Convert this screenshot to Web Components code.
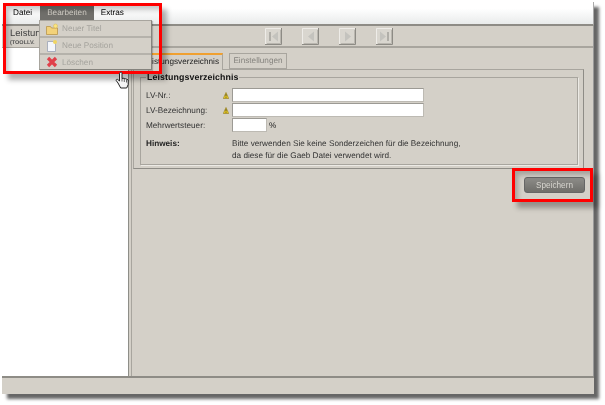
<!DOCTYPE html>
<html>
<head>
<meta charset="utf-8">
<style>
html, body { margin: 0; padding: 0; background: #fff; overflow: hidden; }
body { width: 605px; height: 405px; position: relative; font: 8.2px "Liberation Sans", Arial, sans-serif; color: #222; text-rendering: geometricPrecision; filter: blur(.3px); }
</style>
</head>
<body>
<app-window>
  <menu-bar slot="menu"></menu-bar>
  <side-panel slot="side"></side-panel>
  <nav-toolbar slot="toolbar"></nav-toolbar>
  <lv-tabs slot="tabs"></lv-tabs>
  <lv-form slot="content"></lv-form>
</app-window>
<edit-menu></edit-menu>
<red-mark style="left:3px;top:3px;width:153px;height:65px"></red-mark>
<red-mark style="left:512px;top:168px;width:75px;height:28px"></red-mark>
<hand-cursor></hand-cursor>

<script>
const windowTemplate = document.createElement('template');
windowTemplate.innerHTML = `
<style>
:host { display: flex; flex-direction: column; box-sizing: border-box; width: 592px; height: 392px; margin: 2px 0 0 2px;
  background: #d4d0c8; box-shadow: 5px 5px 3px #666; }
.main { flex: 1; display: grid; grid-template-columns: 127px 1fr; min-height: 0; border-right: 1px solid #999; }
.side { border-right: 1px solid #8e8e88; background: #fff; }
.right { border-left: 2px solid #d4d0c8; box-shadow: inset 1px 0 0 #a8a59e; display: flex; flex-direction: column; min-width: 0; }
.status { height: 16px; border-top: 2px solid #8e8c86; background: #d4d0c8; }
</style>
<slot name="menu"></slot>
<div class="main">
  <div class="side"><slot name="side"></slot></div>
  <div class="right">
    <slot name="toolbar"></slot>
    <slot name="tabs"></slot>
    <slot name="content"></slot>
  </div>
</div>
<div class="status"></div>
`;
class AppWindow extends HTMLElement {
  constructor() {
    super();
    this.attachShadow({mode: 'open'}).append(windowTemplate.content.cloneNode(true));
  }
}
customElements.define('app-window', AppWindow);

class MenuBar extends HTMLElement {
  constructor() {
    super();
    this.attachShadow({mode: 'open'}).innerHTML = `
<style>
:host { display: flex; height: 24px; box-sizing: border-box; padding: 4px 0 0 5px; align-items: flex-start;
  background: linear-gradient(#fff 30%, #e9ebeb); border-bottom: 2px solid #8e8c86; border-right: 1px solid #aaa; }
span { height: 14px; line-height: 14px; padding: 0 7px 0 6px; font-size: 8.2px; color: #000; }
.on { background: #706f6b; color: #d4d0c8; padding: 0 7px; margin: 0 1px 0 1px; }
</style>
<span>Datei</span><span class="on">Bearbeiten</span><span>Extras</span>`;
  }
}
customElements.define('menu-bar', MenuBar);

class SidePanel extends HTMLElement {
  constructor() {
    super();
    this.attachShadow({mode: 'open'}).innerHTML = `
<style>
:host { display: block; }
.head { height: 19px; background: #d4d0c8; border-bottom: 1px solid #a8a59e; padding: 2px 0 0 8px; overflow: hidden; }
b { display: block; font-weight: normal; font-size: 9.5px; line-height: 11px; color: #444; }
small { display: block; font-size: 5.5px; line-height: 8px; font-weight: bold; color: #555; }
</style>
<div class="head"><b>Leistun</b><small>(TOOLLV.</small></div>`;
  }
}
customElements.define('side-panel', SidePanel);

const navIcons = {
  first: '<path d="M4 4h2v9H4z" fill="#b0aea8"/><path d="M13 3.500v10L7 8.500z"/>',
  prev: '<path d="M12 3.500v10L6 8.500z"/>',
  next: '<path d="M6 3.500v10l6-5z"/>',
  last: '<path d="M4 3.500v10l6-5z"/><path d="M11 4h2v9h-2z" fill="#b0aea8"/>'
};
class NavToolbar extends HTMLElement {
  constructor() {
    super();
    const buttons = Object.values(navIcons).map(p => `<svg width="17" height="17" viewBox="0 0 17 17">
      <rect width="17" height="17" fill="#d9d6cf"/><path d="M.5 16V.5H16" fill="none" stroke="#eeece8"/><path d="M16.500 0v16.500H0" fill="none" stroke="#8d8b85"/><path d="M15.500 2v13.500H2" fill="none" stroke="#b9b6af"/>
      <g fill="#c4c3be">${p}</g></svg>`).join('');
    this.attachShadow({mode: 'open'}).innerHTML = `
<style>
:host { display: flex; padding: 2px 0 0 134px; box-sizing: border-box; gap: 20px; border-bottom: 2px solid #a8a59e; height: 22px; }
svg { display: block; }
</style>${buttons}`;
  }
}
customElements.define('nav-toolbar', NavToolbar);

class LvTabs extends HTMLElement {
  constructor() {
    super();
    this.attachShadow({mode: 'open'}).innerHTML = `
<style>
:host { display: flex; align-items: flex-start; gap: 6px; height: 22px; box-sizing: border-box; padding: 5px 0 0 8px; margin-bottom: -1px; position: relative; z-index: 1; }
div { box-sizing: border-box; height: 16px; line-height: 14px; font-size: 8.2px; text-align: center; border: 1px solid #a8a59e; }
.on { width: 84px; height: 17px; border-top: 2px solid #f0a030; border-bottom: 0; background: #d4d0c8; color: #222; }
.off { width: 58px; color: #85837e; }
</style>
<div class="on">Leistungsverzeichnis</div><div class="off">Einstellungen</div>`;
  }
}
customElements.define('lv-tabs', LvTabs);

class FormRow extends HTMLElement {
  constructor() {
    super();
    const warn = this.hasAttribute('warn') ? `<svg width="6" height="7" viewBox="0 0 6 7"><path d="M3 .5 5.700 6.500H.3z" fill="#f2d21e" stroke="#8a7420" stroke-width=".6"/><path d="M3 2.200v2.300M3 5v.8" stroke="#333" stroke-width=".8"/></svg>` : '';
    this.attachShadow({mode: 'open'}).innerHTML = `
<style>
:host { display: grid; grid-template-columns: 75px 11px 1fr; align-items: center; height: 14px; margin-bottom: 1px; padding-left: 5px; }
label { font-size: 8.2px; color: #333; }
svg { display: block; margin-left: 2px; }
.box { display: flex; align-items: center; gap: 2px; font-size: 8.2px; }
i { display: block; box-sizing: border-box; height: 14px; background: #fff; border: 1px solid #9c9a94; border-right-color: #bdbab3; border-bottom-color: #bdbab3; width: var(--w, 192px); }
</style>
<label>${this.getAttribute('label')}</label><span>${warn}</span>
<div class="box"><i></i><slot></slot></div>`;
  }
}
customElements.define('form-row', FormRow);

class LvForm extends HTMLElement {
  constructor() {
    super();
    this.attachShadow({mode: 'open'}).innerHTML = `
<style>
:host { display: block; }
.panel { box-sizing: border-box; width: 451px; height: 100px; margin-left: 2px; padding: 3px 5px 0 6px; border: 1px solid #a8a59e; border-right-color: #8e8c86; border-bottom-color: #8e8c86; }
fieldset { box-sizing: border-box; height: 92px; margin: 0; padding: 0; border: 1px solid #a8a59e; box-shadow: 1px 1px 0 #eceae5; }
legend { margin-left: 5px; padding: 0 1px; font-size: 8.8px; font-weight: bold; color: #111; line-height: 9px; letter-spacing: .1px; }
.rows { padding-top: 6px; }
.hint { display: grid; grid-template-columns: 86px 1fr; padding: 5px 0 0 5px; font-size: 8.2px; line-height: 12px; color: #333; }
.hint b { color: #222; }
.actions { display: flex; justify-content: flex-end; padding-top: 8px; width: 454px; }
button { box-sizing: border-box; width: 61px; height: 16px; padding: 0; border: 1px solid #666; border-radius: 3px; font: 8.2px "Liberation Sans", Arial, sans-serif; color: #d8d6d0;
  background: linear-gradient(#8d8c88, #6f6e6a); }
</style>
<div class="panel">
  <fieldset>
    <legend>Leistungsverzeichnis</legend>
    <div class="rows">
      <form-row label="LV-Nr.:" warn></form-row>
      <form-row label="LV-Bezeichnung:" warn></form-row>
      <form-row label="Mehrwertsteuer:" style="--w:35px">%</form-row>
    </div>
    <div class="hint"><b>Hinweis:</b><span>Bitte verwenden Sie keine Sonderzeichen für die Bezeichnung,<br>da diese für die Gaeb Datei verwendet wird.</span></div>
  </fieldset>
</div>
<div class="actions"><button>Speichern</button></div>`;
  }
}
customElements.define('lv-form', LvForm);

class EditMenu extends HTMLElement {
  constructor() {
    super();
    this.attachShadow({mode: 'open'}).innerHTML = `
<style>
:host { position: absolute; left: 39px; top: 20px; width: 113px; box-sizing: border-box; background: #d4d0c8; border: 1px solid #a8a59e; border-right-color: #85837d; border-bottom-color: #85837d; z-index: 3; box-shadow: 1px 1px 1px rgba(0,0,0,.2); }
div { display: flex; align-items: center; gap: 4px; height: 15px; padding-left: 6px; font-size: 8.2px; color: #a5a39d; border-bottom: 2px solid #b5b2ab; }
div:last-child { border-bottom: 0; height: 14px; }
svg { flex: none; display: block; }
</style>
<div><svg width="12" height="12" viewBox="0 0 12 12"><path d="M.5 3.500h4l1 1.500h6v6.500H.5z" fill="#f3d27a" stroke="#b9964a" stroke-width=".8"/><circle cx="9.500" cy="3" r="2" fill="#fbe680" stroke="#d8b850" stroke-width=".5"/></svg>Neuer Titel</div>
<div><svg width="12" height="13" viewBox="0 0 12 13"><path d="M1.500 2.500h6l2 2v8h-8z" fill="#f4f6fb" stroke="#9aa3b5" stroke-width=".8"/><circle cx="9" cy="3" r="2" fill="#f0d560"/></svg>Neue Position</div>
<div><svg width="12" height="12" viewBox="0 0 12 12"><path d="M2 2l8 8M10 2l-8 8" stroke="#e0404a" stroke-width="3.200"/></svg>Löschen</div>`;
  }
}
customElements.define('edit-menu', EditMenu);

class RedMark extends HTMLElement {
  constructor() {
    super();
    this.attachShadow({mode: 'open'}).innerHTML = `
<style>
:host { position: absolute; display: block; border: 3px solid #f00; z-index: 4; box-shadow: 5px 6px 5px rgba(0,0,0,.3), inset 5px 6px 5px -2px rgba(0,0,0,.22); }
</style>`;
  }
}
customElements.define('red-mark', RedMark);

class HandCursor extends HTMLElement {
  constructor() {
    super();
    this.attachShadow({mode: 'open'}).innerHTML = `
<style>
:host { position: absolute; left: 115px; top: 71px; width: 16px; height: 19px; z-index: 5; }
svg { display: block; }
</style>
<svg width="16" height="19" viewBox="0 0 16 19"><path d="M5 1.500c1-.8 2-.3 2 .8v5.200l1-.3 1.200.2 1.200.3 1.200.4 1.600.9v4.500l-1.500 3.500h-6L3 12 1.200 9.500c-.4-1 .8-1.700 1.700-.9L4.500 10V2.500z" fill="#f4f4f4" stroke="#222" stroke-width="1"/><path d="M7 7.500v3M9.300 8v3M11.500 8.500v3" stroke="#222" stroke-width=".7"/></svg>`;
  }
}
customElements.define('hand-cursor', HandCursor);
</script>
</body>
</html>
